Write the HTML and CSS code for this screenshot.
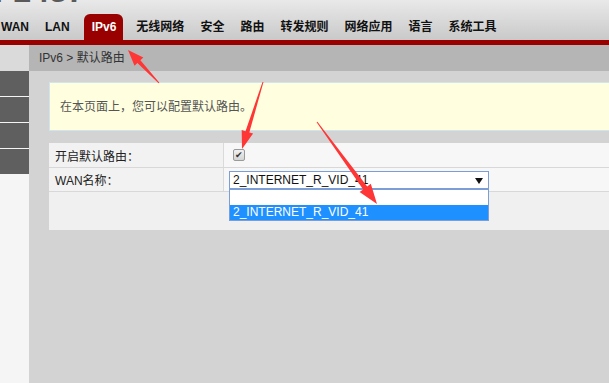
FILE: index.html
```html
<!DOCTYPE html>
<html>
<head>
    <title>IPv6 - 默认路由</title>
    <link rel="stylesheet" href="styles.css">
</head>
<body>
    <div id="header">
        <div class="logo"><span>F2437</span></div>
        <ul class="nav">
            <li>WAN</li>
            <li>LAN</li>
            <li class="active">IPv6</li>
            <li>无线网络</li>
            <li>安全</li>
            <li>路由</li>
            <li>转发规则</li>
            <li>网络应用</li>
            <li>语言</li>
            <li>系统工具</li>
        </ul>
    </div>
    <div class="redline"></div>

    <div id="main">
        <div id="sidebar">
            <div class="side-head"></div>
            <div class="side-item"></div>
            <div class="side-item"></div>
            <div class="side-item"></div>
            <div class="side-item"></div>
        </div>

        <div id="content">
            <div class="crumb">IPv6 &gt; 默认路由</div>
            <div class="inner">
                <div class="tip">在本页面上，您可以配置默认路由。</div>

                <table class="form">
                    <tr class="row1">
                        <td class="label">开启默认路由：</td>
                        <td class="value"><span class="check">&#10004;</span></td>
                    </tr>
                    <tr class="row2">
                        <td class="label">WAN名称：</td>
                        <td class="value">
                            <div class="select">
                                <span class="sel-text">2_INTERNET_R_VID_41</span>
                                <span class="sel-arrow"></span>
                                <div class="sel-list">
                                    <div class="opt"></div>
                                    <div class="opt selected">2_INTERNET_R_VID_41</div>
                                </div>
                            </div>
                        </td>
                    </tr>
                    <tr>
                        <td class="buttons" colspan="2"></td>
                    </tr>
                </table>
            </div>
        </div>
    </div>

    <!-- annotation arrows -->
    <svg class="marks" width="609" height="383" viewBox="0 0 609 383">
        <polygon points="159.4,82.7 140.4,60.2 143.3,57.5 128,50 134.5,65.7 137.4,63 158.6,83.3"/>
        <polygon points="262.5,81.9 245.5,131.2 241.7,130 242,149 253.1,133.6 249.3,132.4 263.5,82.1"/>
        <polygon points="316.6,122.3 363.2,189.4 359.6,192 377,204 370.8,183.8 367.2,186.4 317.4,121.7"/>
    </svg>
</body>
</html>
```

FILE: styles.css
```css
body {
    margin: 0;
    height: 383px;
    overflow: hidden;
    background-color: #d3d3d3;
    font-family: "Liberation Sans", "Noto Sans CJK SC", Arial, sans-serif;
    font-size: 12px;
    color: #333;
    position: relative;
}

#header {
    height: 40px;
    background: linear-gradient(#e9e9e9, #c9c9c9);
}

#header .logo {
    height: 13px;
    overflow: hidden;
}

#header .logo span {
    display: block;
    margin-top: -25px;
    margin-left: -6px;
    font-size: 32px;
    font-weight: bold;
    line-height: 32px;
    color: #5a5a5a;
}

.nav {
    list-style: none;
    margin: 0 0 0 -7px;
    padding: 0;
    display: flex;
    height: 27px;
    align-items: flex-end;
}

.nav li {
    padding: 0 8px;
    height: 26px;
    line-height: 26px;
    font-weight: bold;
    color: #111;
    white-space: nowrap;
}

.nav li.active {
    margin: 0 5px 0 6px;
    padding: 0 7px 0 8px;
    background-color: #990000;
    color: #fff;
    border-radius: 6px 6px 0 0;
}

.redline {
    height: 5px;
    background-color: #990000;
}

#main {
    display: flex;
    height: 338px;
}

#sidebar {
    width: 29px;
    flex-shrink: 0;
    background-color: #f5f5f5;
}

.side-head {
    height: 26px;
    background-color: #dadada;
}

.side-item {
    height: 25px;
    margin-top: 1px;
    background-color: #5f5f5f;
}

.side-head + .side-item {
    margin-top: 0;
}

#content {
    flex: 1;
    min-width: 0;
    background-color: #d3d3d3;
}

.crumb {
    height: 26px;
    line-height: 26px;
    padding-left: 10px;
    background-color: #b5b5b5;
    color: #333;
}

.inner {
    padding: 11px 0 0 20px;
}

.tip {
    height: 45px;
    padding-top: 2px;
    line-height: 45px;
    padding-left: 10px;
    background-color: #ffffe0;
    border: 1px solid #d2e4ee;
    border-right: none;
    color: #555;
}

.form {
    width: 100%;
    margin-top: 12px;
    border-collapse: collapse;
}

.form td {
    padding: 0;
    vertical-align: middle;
}

.form .label {
    width: 168px;
    padding-left: 6px;
    background-color: #f2f2f2;
    border-right: 1px solid #dadada;
    border-bottom: 1px solid #d8d8d8;
    color: #222;
}

.form .row1 td {
    height: 24px;
}

.form .row2 td {
    height: 23px;
}

.form .value {
    padding-left: 5px;
    background-color: #f7f7f7;
    border-bottom: 1px solid #d8d8d8;
}

.form .buttons {
    height: 38px;
    background-color: #f0f0f0;
}

.check {
    display: block;
    width: 10px;
    height: 10px;
    margin-left: 4px;
    border: 1px solid #9a9a9a;
    border-radius: 2px;
    background: linear-gradient(#f0f0f0, #d4d4d4);
    font-size: 9px;
    line-height: 11px;
    text-align: center;
    color: #333;
}

.select {
    position: relative;
    width: 258px;
    height: 16px;
    border: 1px solid #7c9ed6;
    background-color: #fff;
    line-height: 16px;
}

.sel-text {
    padding-left: 3px;
    color: #111;
}

.sel-arrow {
    position: absolute;
    right: 5px;
    top: 6px;
    border-left: 4px solid transparent;
    border-right: 4px solid transparent;
    border-top: 6px solid #111;
}

.sel-list {
    position: absolute;
    left: -1px;
    top: 17px;
    width: 258px;
    border: 1px solid #7c9ed6;
    background-color: #fff;
    z-index: 2;
}

.opt {
    height: 15px;
    line-height: 15px;
    padding-left: 3px;
}

.opt.selected {
    background-color: #1e90ff;
    color: #fff;
}

.marks {
    position: absolute;
    left: 0;
    top: 0;
    z-index: 5;
    pointer-events: none;
}

.marks polygon {
    fill: #ff3636;
}
```
